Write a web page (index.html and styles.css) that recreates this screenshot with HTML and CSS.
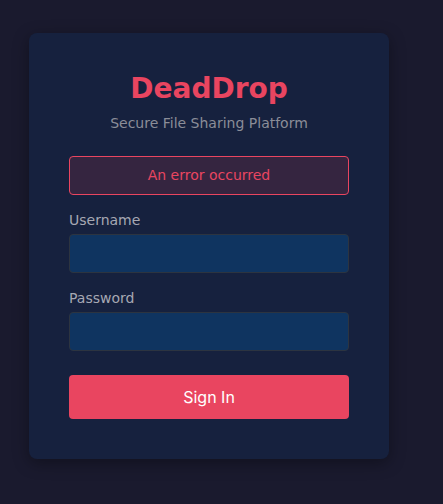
FILE: index.html
```html
<!DOCTYPE html>
<html lang="en">
<head>
    <meta charset="UTF-8">
    <meta name="viewport" content="width=device-width, initial-scale=1.0">
    <title>DeadDrop - Sign In</title>
    <link rel="stylesheet" href="styles.css">
</head>
<body>
    <div class="login-card">
        <h1 class="brand">DeadDrop</h1>
        <p class="tagline">Secure File Sharing Platform</p>

        <div class="error-box">An error occurred</div>

        <form class="login-form">
            <div class="form-group">
                <label for="username">Username</label>
                <input type="text" id="username" class="form-control">
            </div>
            <div class="form-group">
                <label for="password">Password</label>
                <input type="password" id="password" class="form-control">
            </div>
            <button type="submit" class="btn-signin">Sign In</button>
        </form>
    </div>
</body>
</html>
```

FILE: styles.css
```css
body { margin: 0; padding: 33px 0 45px 29px; background-color: #1a1a2e; font-family: "DejaVu Sans", sans-serif; }
.login-card {
    width: 360px;
    box-sizing: border-box;
    padding: 39px 40px 40px;
    background-color: #16213e;
    border-radius: 8px;
    box-shadow: 0 4px 16px rgba(0, 0, 0, 0.35);
}
.brand { margin: 0; text-align: center; font-size: 28px; font-weight: bold; color: #e94560; }
.tagline { margin: 10px 0 25px; text-align: center; font-size: 14px; color: #8b8d98; }
.error-box {
    padding: 10px;
    margin-bottom: 17px;
    line-height: 17px;
    text-align: center;
    font-size: 14px;
    color: #e94560;
    background-color: #352540;
    border: 1px solid #e94560;
    border-radius: 4px;
}
.form-group { margin-bottom: 17px; }
label { display: block; margin-bottom: 6px; font-size: 14px; color: #a6a8b3; }
.form-control {
    display: block;
    width: 100%;
    height: 39px;
    box-sizing: border-box;
    padding: 8px;
    background-color: #0f3460;
    border: 1px solid #2c3440;
    border-radius: 4px;
    color: #fff;
}
.btn-signin {
    display: block;
    width: 100%;
    height: 44px;
    margin-top: 24px;
    background-color: #e94560;
    color: #fff;
    border: none;
    border-radius: 4px;
    font-family: Inter, sans-serif;
    font-size: 16px;
    cursor: pointer;
}
```
